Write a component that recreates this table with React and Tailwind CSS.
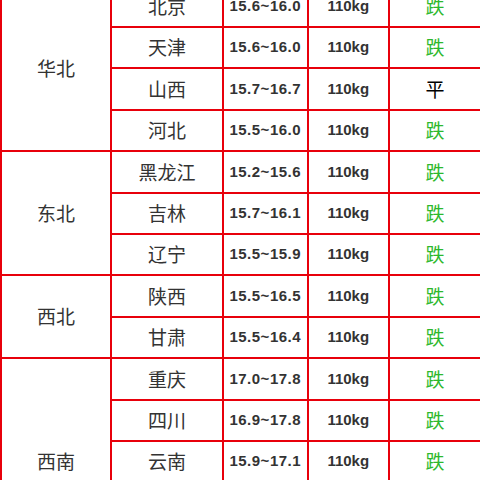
import React from "react";

const regions = [
  {
    name: "华北",
    rows: [
      ["北京", "15.6~16.0", "跌"],
      ["天津", "15.6~16.0", "跌"],
      ["山西", "15.7~16.7", "平"],
      ["河北", "15.5~16.0", "跌"],
    ],
  },
  {
    name: "东北",
    rows: [
      ["黑龙江", "15.2~15.6", "跌"],
      ["吉林", "15.7~16.1", "跌"],
      ["辽宁", "15.5~15.9", "跌"],
    ],
  },
  {
    name: "西北",
    rows: [
      ["陕西", "15.5~16.5", "跌"],
      ["甘肃", "15.5~16.4", "跌"],
    ],
  },
  {
    name: "西南",
    rows: [
      ["重庆", "17.0~17.8", "跌"],
      ["四川", "16.9~17.8", "跌"],
      ["云南", "15.9~17.1", "跌"],
      ["贵州", "16.0~17.0", "跌"],
      ["西藏", "16.5~17.5", "跌"],
    ],
  },
];

const cjk = { fontFamily: '"Noto Sans CJK SC", sans-serif' };
const num = { fontFamily: '"Liberation Sans", Arial, sans-serif' };

const App = () => {
  return (
    <div className="w-[480px] h-[480px] overflow-hidden bg-white">
      <table className="-mt-[15.4px] w-[480px] table-fixed border-collapse border-2 border-[#e8000b]">
        <colgroup>
          <col className="w-[110px]" />
          <col className="w-[112px]" />
          <col className="w-[84.5px]" />
          <col className="w-[81.5px]" />
          <col className="w-[92px]" />
        </colgroup>
        <tbody>
          {regions.map((region) =>
            region.rows.map((row, i) => (
              <tr key={region.name + row[0]} className="h-[41.4px]">
                {i === 0 && (
                  <td
                    rowSpan={region.rows.length}
                    className="border-2 border-[#e8000b] text-center text-[19px] text-[#333] p-0"
                    style={cjk}
                  >
                    {region.name}
                  </td>
                )}
                <td className="border-2 border-[#e8000b] text-center text-[19px] text-[#333] p-0" style={cjk}>
                  {row[0]}
                </td>
                <td
                  className="border-2 border-[#e8000b] text-center text-[15px] font-bold tracking-[0.5px] text-[#333] p-0"
                  style={num}
                >
                  {row[1]}
                </td>
                <td className="border-2 border-[#e8000b] text-center text-[15px] font-bold text-[#333] p-0" style={num}>
                  110kg
                </td>
                <td
                  className={
                    row[2] === "跌"
                      ? "border-2 border-[#e8000b] text-center text-[19px] text-[#2db82d] p-0"
                      : "border-2 border-[#e8000b] text-center text-[19px] text-black p-0"
                  }
                  style={cjk}
                >
                  {row[2]}
                </td>
              </tr>
            ))
          )}
        </tbody>
      </table>
    </div>
  );
};

export default App;
